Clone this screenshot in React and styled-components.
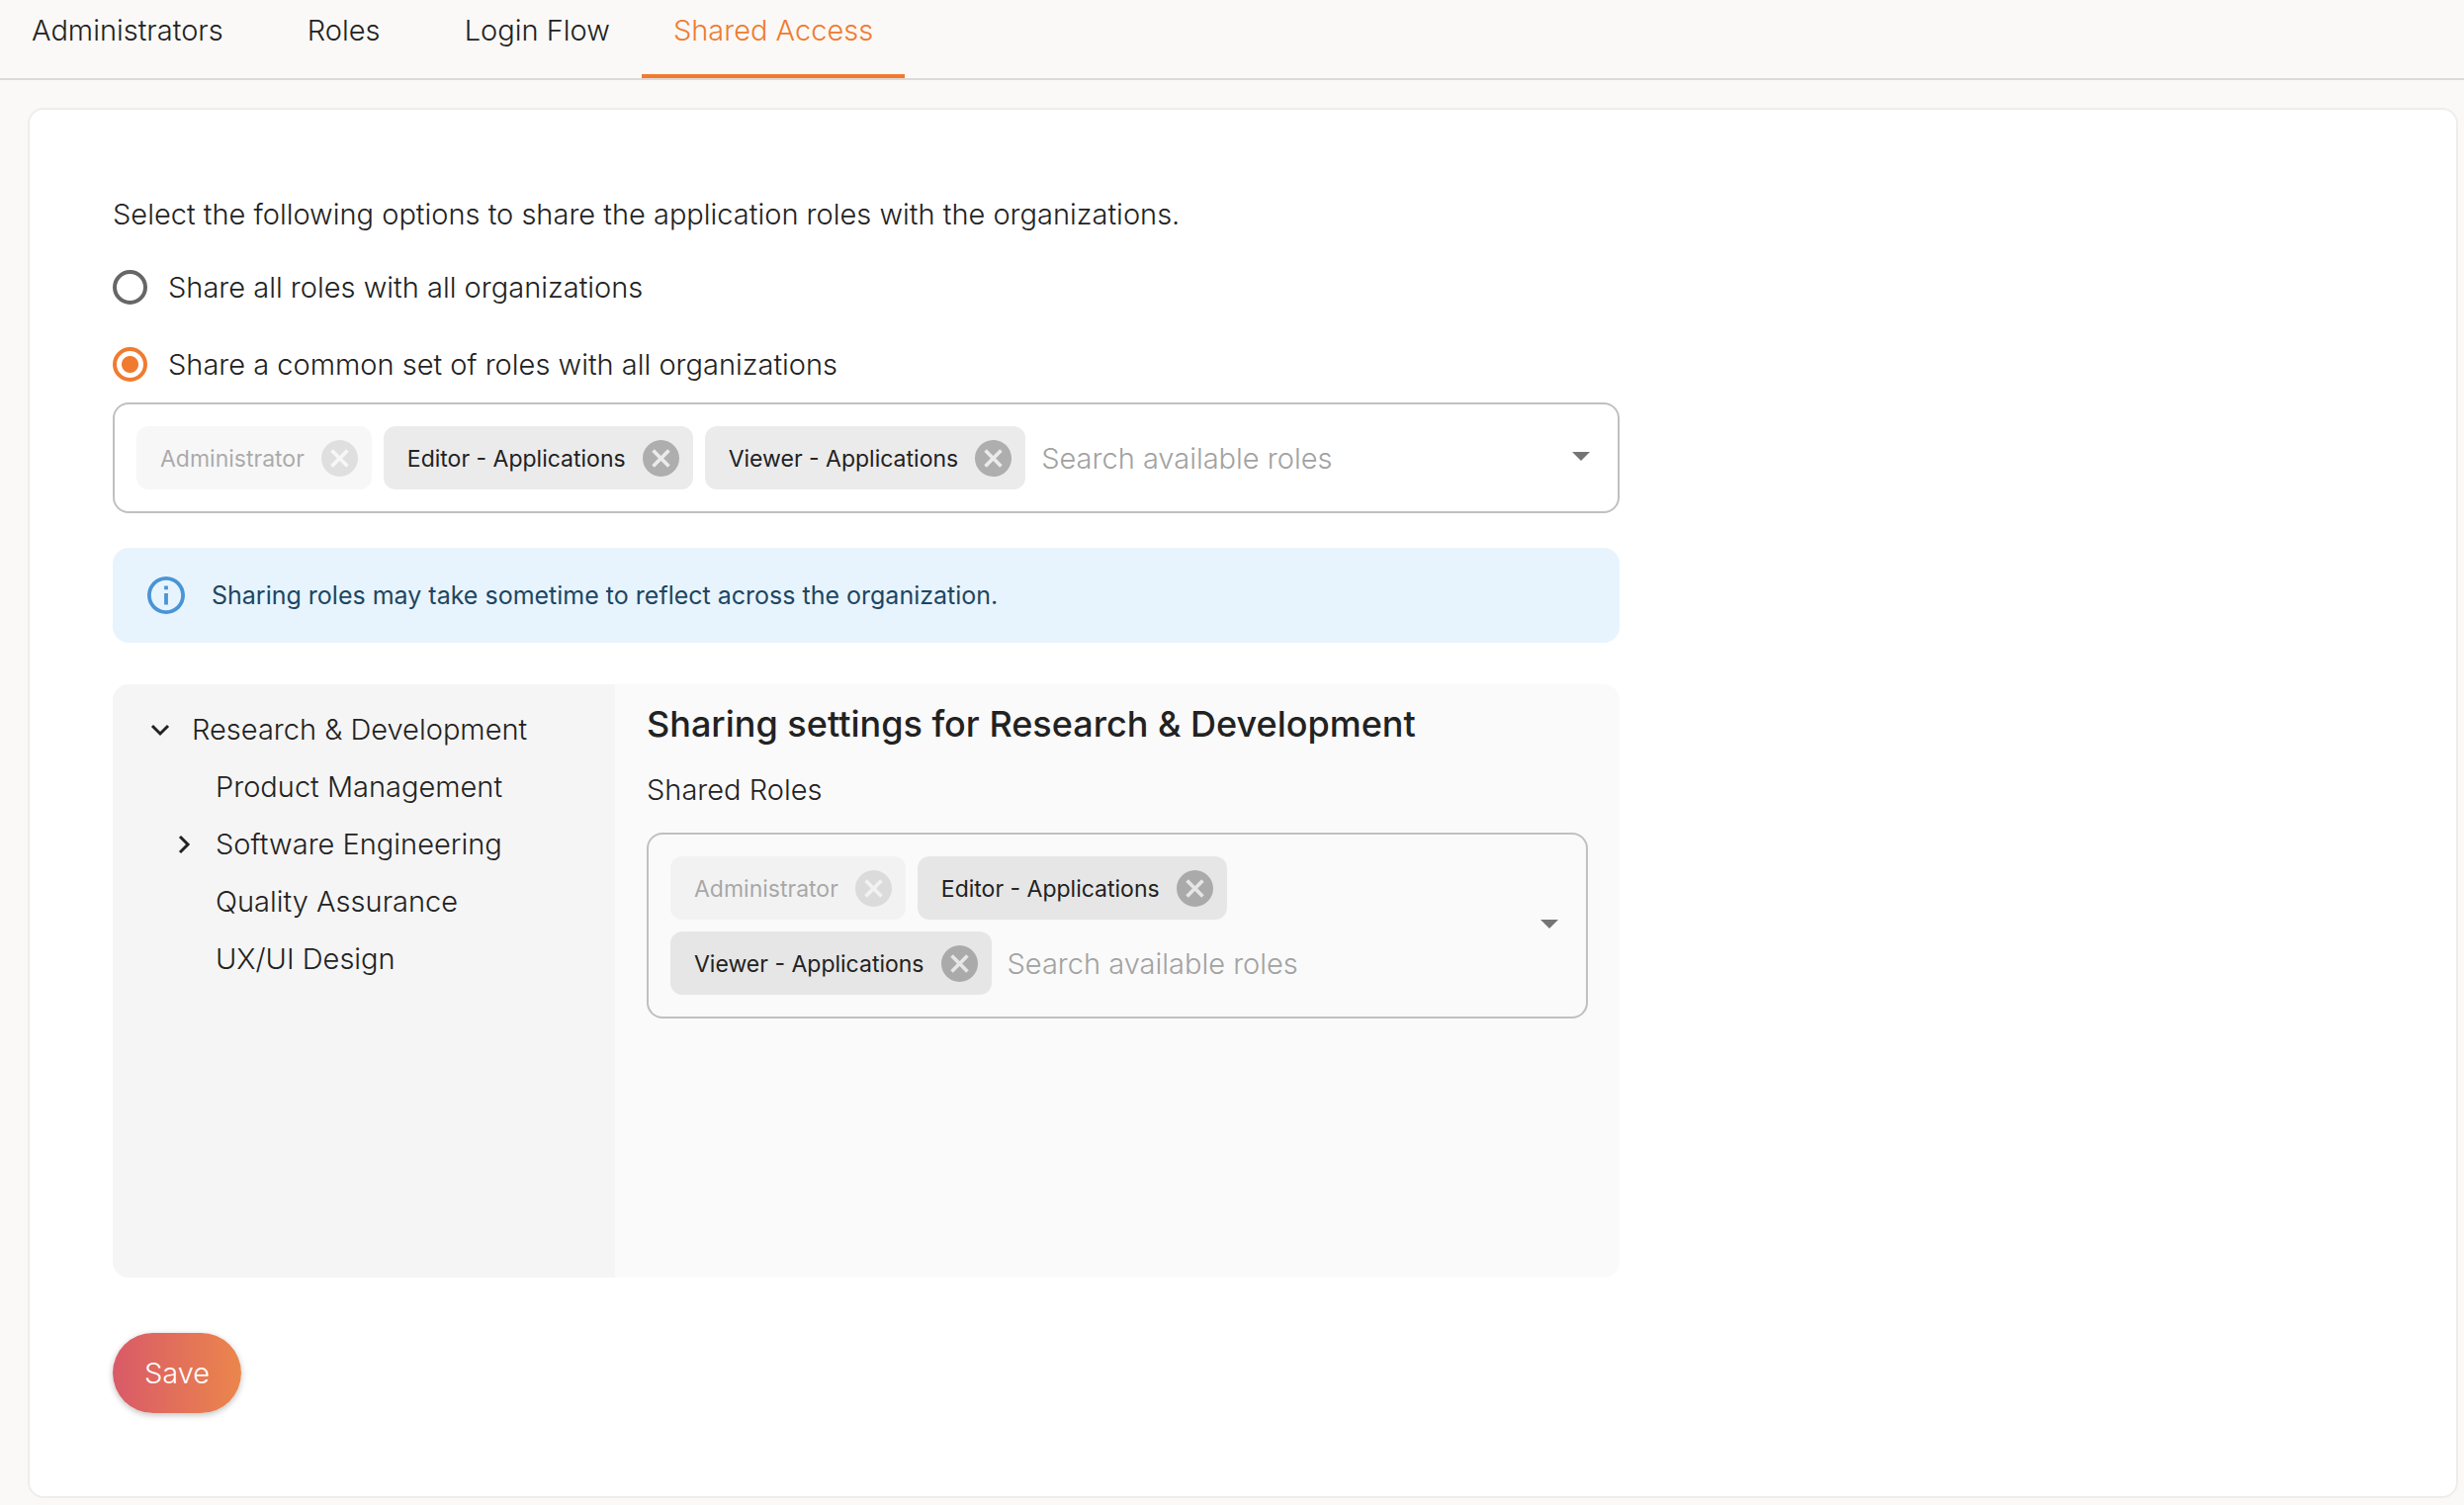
import React, { useState } from "react";

import styled, { createGlobalStyle } from "styled-components";

const tabs = ["Administrators", "Roles", "Login Flow", "Shared Access"];

const roles = [
  { name: "Administrator", disabled: true },
  { name: "Editor - Applications" },
  { name: "Viewer - Applications" },
];

const shareOptions = [
  { value: "all", label: "Share all roles with all organizations" },
  { value: "common", label: "Share a common set of roles with all organizations" },
];

const childOrganizations = [
  { name: "Product Management" },
  { name: "Software Engineering", expandable: true },
  { name: "Quality Assurance" },
  { name: "UX/UI Design" },
];

const Chevron = ({ open }) => (
  <svg width="20" height="20" viewBox="0 0 20 20" fill="none" stroke="currentColor" strokeWidth="3">
    <path d={open ? "M2 6l8 8 8-8" : "M6 2l8 8-8 8"} />
  </svg>
);

const RoleSelect = ({ id, label }) => (
  <StyledSelect>
    <StyledChips>
      {roles.map((role) => (
        <StyledChip key={role.name} $disabled={role.disabled}>
          <StyledItemText>{role.name}</StyledItemText>
          <StyledRemove type="button" disabled={role.disabled} aria-label={`Remove ${role.name}`}>
            <svg width="37" height="37" viewBox="2 2 20 20" fill="currentColor">
              <path d="M12 2C6.47 2 2 6.47 2 12s4.47 10 10 10 10-4.47 10-10S17.53 2 12 2zm5 13.59L15.59 17 12 13.41 8.41 17 7 15.59 10.59 12 7 8.41 8.41 7 12 10.59 15.59 7 17 8.41 13.41 12 17 15.59z" />
            </svg>
          </StyledRemove>
        </StyledChip>
      ))}
      <StyledInput id={id} type="text" aria-label={label} placeholder="Search available roles" />
    </StyledChips>
    <StyledToggle type="button" aria-label="Open">
      <svg width="18" height="9" viewBox="0 0 18 9" fill="currentColor">
        <path d="M0 0h18L9 9z" />
      </svg>
    </StyledToggle>
  </StyledSelect>
);

const App = () => {
  const [mode, setMode] = useState("common");

  return (
    <>
      <GlobalStyle />
      <StyledTabs>
        {tabs.map((tab) => (
          <StyledTab key={tab} type="button" $active={tab === "Shared Access"}>
            {tab}
          </StyledTab>
        ))}
      </StyledTabs>
      <StyledCard>
        <StyledContent>
          <StyledIntro>
            Select the following options to share the application roles with the organizations.
          </StyledIntro>
          {shareOptions.map((option) => (
            <StyledRadioLabel key={option.value}>
              <StyledRadio
                type="radio"
                name="share-mode"
                value={option.value}
                checked={mode === option.value}
                onChange={() => setMode(option.value)}
              />
              <StyledItemText>{option.label}</StyledItemText>
            </StyledRadioLabel>
          ))}
          <RoleSelect id="common-roles" label="Common roles" />
          <StyledAlert>
            <svg width="38" height="38" viewBox="2 2 20 20" fill="#4a94d6">
              <path d="M11 7h2v2h-2zm0 4h2v6h-2zm1-9C6.48 2 2 6.48 2 12s4.48 10 10 10 10-4.48 10-10S17.52 2 12 2zm0 18c-4.41 0-8-3.59-8-8s3.59-8 8-8 8 3.59 8 8-3.59 8-8 8z" />
            </svg>
            Sharing roles may take sometime to reflect across the organization.
          </StyledAlert>
          <StyledPanel>
            <StyledTree>
              <StyledTreeItem>
                <StyledTreeButton type="button" aria-expanded="true">
                  <Chevron open />
                  Research &amp; Development
                </StyledTreeButton>
                <StyledSubTree>
                  {childOrganizations.map((org) => (
                    <StyledTreeItem key={org.name}>
                      <StyledTreeButton type="button" $child $leaf={!org.expandable}>
                        {org.expandable && <Chevron />}
                        {org.name}
                      </StyledTreeButton>
                    </StyledTreeItem>
                  ))}
                </StyledSubTree>
              </StyledTreeItem>
            </StyledTree>
            <StyledSettings>
              <StyledHeading>Sharing settings for Research &amp; Development</StyledHeading>
              <StyledLabel htmlFor="shared-roles">Shared Roles</StyledLabel>
              <RoleSelect id="shared-roles" />
            </StyledSettings>
          </StyledPanel>
          <StyledSave type="button">Save</StyledSave>
        </StyledContent>
      </StyledCard>
    </>
  );
};

export default App;

const GlobalStyle = createGlobalStyle`
  * {
    box-sizing: border-box;
  }

  body {
    margin: 0;
    background-color: #faf9f7;
    color: #222222;
    font-family: Inter, sans-serif;
    font-size: 29px;
    font-weight: 350;
    line-height: 42px;
  }

  button,
  input {
    font: inherit;
    color: inherit;
  }

  button {
    padding: 0;
    border: none;
    background: none;
    cursor: pointer;
  }

  svg {
    display: block;
    flex-shrink: 0;
  }
`;

const StyledTabs = styled.nav`
  display: flex;
  border-bottom: 2px solid #dcdad8;
`;

const StyledTab = styled.button`
  && {
    min-width: 180px;
    padding: 10px 32px 23px;
    border-bottom: 4px solid ${({ $active }) => ($active ? "#f07b2f" : "transparent")};
    color: ${({ $active }) => ($active ? "#f07b2f" : "#222222")};
  }
`;

const StyledCard = styled.main`
  margin: 28px 6px 6px 28px;
  padding: 85px 84px 84px;
  border: 2px solid #ededed;
  border-radius: 16px;
  background-color: #ffffff;
`;

const StyledContent = styled.form`
  width: calc(100% * 2 / 3);
`;

const StyledIntro = styled.p`
  margin: 0 0 13px;
`;

const StyledRadioLabel = styled.label`
  display: flex;
  align-items: center;
  gap: 21px;
  height: 78px;
  cursor: pointer;
`;

const StyledItemText = styled.span`
  padding-top: 2px;
`;

const StyledRadio = styled.input`
  appearance: none;
  width: 35px;
  height: 35px;
  margin: 0;
  border: 4px solid #666666;
  border-radius: 50%;

  &:checked {
    border-color: #f07b2f;
    background: radial-gradient(circle, #f07b2f 8px, transparent 9px);
  }
`;

const StyledSelect = styled.div`
  display: flex;
  align-items: center;
  padding: 22px;
  border: 2px solid #c0c0c0;
  border-radius: 16px;
`;

const StyledChips = styled.div`
  display: flex;
  flex: 1;
  flex-wrap: wrap;
  gap: 12px;
`;

const StyledChip = styled.div`
  display: flex;
  align-items: center;
  gap: 17px;
  height: 64px;
  padding: 0 14px 0 24px;
  border-radius: 12px;
  background-color: rgba(0, 0, 0, 0.08);
  font-size: 23px;
  font-weight: 400;
  opacity: ${({ $disabled }) => ($disabled ? 0.38 : 1)};
`;

const StyledRemove = styled.button`
  && {
    color: rgba(34, 34, 34, 0.3);
  }
`;

const StyledInput = styled.input`
  flex: 1;
  min-width: 320px;
  padding: 2px 4px 0;
  border: none;
  outline: none;
  background: transparent;

  &::placeholder {
    color: #a2a2a2;
    opacity: 1;
  }
`;

const StyledToggle = styled.button`
  && {
    padding: 6px 6px 10px;
    color: #757575;
  }
`;

const StyledAlert = styled.div`
  display: flex;
  align-items: center;
  gap: 27px;
  height: 96px;
  margin-top: 35px;
  padding: 0 35px;
  border-radius: 16px;
  background-color: #e8f4fd;
  color: #1d4663;
  font-size: 25px;
  font-weight: 400;
`;

const StyledPanel = styled.section`
  display: grid;
  grid-template-columns: 1fr 2fr;
  min-height: 600px;
  margin-top: 42px;
  border-radius: 16px;
  background-color: #fafafa;
  overflow: hidden;
`;

const StyledTree = styled.ul`
  margin: 0;
  padding: 17px 38px;
  background-color: #f5f5f5;
  list-style: none;
`;

const StyledSubTree = styled.ul`
  margin: 0;
  padding: 0;
  list-style: none;
`;

const StyledTreeItem = styled.li``;

const StyledTreeButton = styled.button`
  && {
    display: flex;
    align-items: center;
    gap: 22px;
    height: 58px;
    padding-left: ${({ $child, $leaf }) => ($leaf ? "66px" : $child ? "24px" : "0")};
  }
`;

const StyledSettings = styled.div`
  padding: 16px 32px;
`;

const StyledHeading = styled.h2`
  margin: 0;
  font-size: 36px;
  font-weight: 500;
  line-height: 48px;
`;

const StyledLabel = styled.label`
  display: block;
  margin: 22px 0;
`;

const StyledSave = styled.button`
  && {
    display: block;
    height: 81px;
    margin-top: 56px;
    padding: 0 32px;
    border-radius: 41px;
    background: linear-gradient(90deg, #d95a68, #eb864c);
    box-shadow: 0 2px 6px rgba(0, 0, 0, 0.25);
    color: #ffffff;
  }
`;
